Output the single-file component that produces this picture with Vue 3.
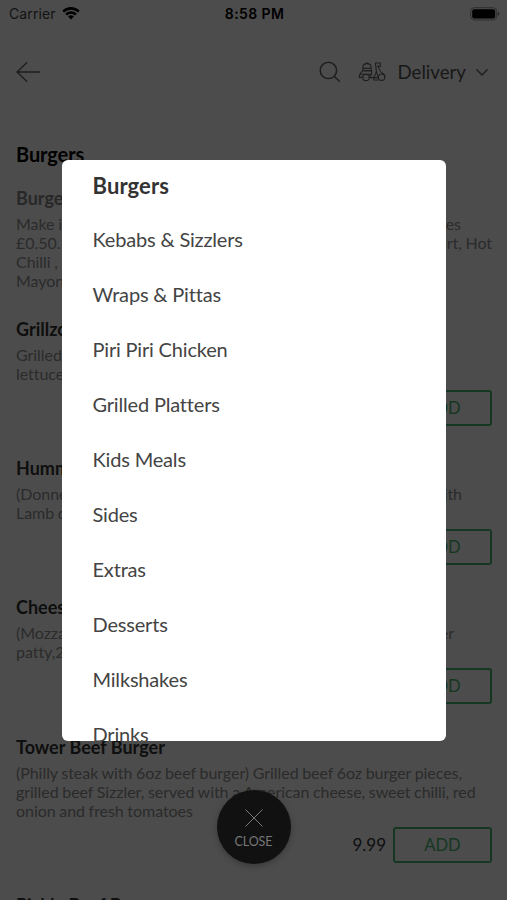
<script setup>
// Menu screen with the category picker open on top

import { ref } from 'vue'

const pickerOpen = ref(true)
const selected = ref('Burgers')

const categories = [
  'Burgers',
  'Kebabs & Sizzlers',
  'Wraps & Pittas',
  'Piri Piri Chicken',
  'Grilled Platters',
  'Kids Meals',
  'Sides',
  'Extras',
  'Desserts',
  'Milkshakes',
  'Drinks',
]

// end: text at the right of the line, width: where the line stops
const note = [
  { text: 'Make it', end: 'sauces', width: 445 },
  { text: '£0.50.', end: 'Yoghurt, Hot', width: 476 },
  { text: 'Chilli , ' },
  { text: 'Mayonnaise' },
]

const items = [
  {
    name: 'Grillzone',
    price: '7.99',
    lines: [{ text: 'Grilled' }, { text: 'lettuce' }],
  },
  {
    name: 'Hummer',
    price: '8.99',
    lines: [{ text: '(Donner', end: 'with', width: 446 }, { text: 'Lamb do' }],
  },
  {
    name: 'Cheese',
    price: '8.99',
    lines: [{ text: '(Mozza', end: 'burger', width: 438 }, { text: 'patty,2' }],
  },
  {
    name: 'Tower Beef Burger',
    price: '9.99',
    lines: [
      { text: '(Philly steak with 6oz beef burger) Grilled beef 6oz burger pieces,' },
      { text: 'grilled beef Sizzler, served with a American cheese, sweet chilli, red' },
      { text: 'onion and fresh tomatoes' },
    ],
  },
  { name: 'Pickle Beef Burger', price: '9.99', lines: [{ text: 'Grilled beef' }] },
]

function choose(name) {
  selected.value = name
  pickerOpen.value = false
}
</script>

<template>
  <div class="screen">
    <div class="status">
      <div class="carrier">
        <span>Carrier</span>
        <svg width="18" height="14" viewBox="0 0 18 14">
          <path d="M0.3 4.7a12.3 12.3 0 0 1 17.4 0l-1.8 1.9a9.8 9.8 0 0 0-13.8 0z" />
          <path d="M3.2 7.7a8.2 8.2 0 0 1 11.6 0l-1.8 1.8a5.7 5.7 0 0 0-8 0z" />
          <path d="M6.1 10.6a4.1 4.1 0 0 1 5.8 0L9 13.5z" />
        </svg>
      </div>
      <div class="time">8:58 PM</div>
      <div class="battery">
        <svg width="30" height="14" viewBox="0 0 30 14">
          <rect x="0.7" y="0.7" width="26" height="12.2" rx="3.6" fill="none" stroke="#999" />
          <rect x="2.2" y="2.2" width="23" height="9.2" rx="2" />
          <path d="M27.8 4.8q1.6 0.6 1.6 2t-1.6 2z" fill="#888" />
        </svg>
      </div>
    </div>

    <header class="header">
      <svg class="back" width="26" height="22" viewBox="0 0 26 22">
        <path d="M24.2 11H1M11.2 1.2L1 11l10.2 9.8" />
      </svg>
      <svg class="search" width="22" height="22" viewBox="0 0 22 22">
        <circle cx="9.4" cy="9.4" r="8.2" />
        <path d="M15.2 15.2l5.6 5.6" />
      </svg>
      <svg class="scooter" width="28" height="20" viewBox="0 0 28 20">
        <path d="M4.8 8.6V6q0-4.4 4.2-4.4T13.2 6v2.6zM4.8 6.4h8.4M7.2 1.8q1.8-1.6 3.6 0" />
        <path d="M4.6 15.4H1.2q-.4-3 3.6-6.8h8.8v3.4l-2 3.4M2.4 12.2h10.8" />
        <circle cx="8" cy="15.4" r="3.2" />
        <circle cx="23.6" cy="15.2" r="3.2" />
        <path d="M11.4 15.6h4.4l2.6-6L17.4 1h4.8v3.4h-2.4l3.4 6q4 1.4 3.6 4.8M18.4 9.6l2 6h-4.6v2.4h5.2" />
      </svg>
      <span class="mode">Delivery</span>
      <svg class="chevron" width="14" height="9" viewBox="0 0 14 9">
        <path d="M1.5 1.5L7 7l5.5-5.5" />
      </svg>
    </header>

    <main class="menu">
      <h1>{{ selected }}</h1>
      <section class="note">
        <h2>Burgers</h2>
        <p v-for="(line, i) in note" :key="i" :style="{ width: line.width + 'px' }">
          <span>{{ line.text }}</span>
          <span v-if="line.end">{{ line.end }}</span>
        </p>
      </section>
      <section v-for="item in items" :key="item.name" class="item">
        <h2>{{ item.name }}</h2>
        <p v-for="(line, i) in item.lines" :key="i" :style="{ width: line.width + 'px' }">
          <span>{{ line.text }}</span>
          <span v-if="line.end">{{ line.end }}</span>
        </p>
        <div class="buy">
          <span>{{ item.price }}</span>
          <button type="button">ADD</button>
        </div>
      </section>
    </main>

    <div v-if="pickerOpen" class="overlay">
      <ul class="picker">
        <li
          v-for="name in categories"
          :key="name"
          :class="{ active: name === selected }"
          @click="choose(name)"
        >
          {{ name }}
        </li>
      </ul>
      <button class="close" type="button" @click="pickerOpen = false">
        <svg width="20" height="20" viewBox="0 0 20 20">
          <path d="M1.5 1.5l17 17M18.5 1.5l-17 17" />
        </svg>
        <span>CLOSE</span>
      </button>
    </div>
  </div>
</template>

<style>
body {
  margin: 0;
  overflow: hidden;
}
</style>

<style scoped>
.screen {
  position: relative;
  height: 900px;
  overflow: hidden;
  background: #fff;
  font-family: Lato, sans-serif;
}
.status {
  display: grid;
  grid-template-columns: 1fr auto 1fr;
  align-items: center;
  height: 27px;
  padding: 0 7px 0 9px;
  font-family: Inter, sans-serif;
  font-size: 14px;
}
.carrier {
  display: flex;
  align-items: center;
  gap: 6px;
  color: #444;
  letter-spacing: 0.1px;
}
.carrier svg {
  margin-top: -2px;
}
.time {
  font-weight: 600;
  letter-spacing: 0.4px;
}
.battery {
  display: flex;
  justify-content: flex-end;
}
.header {
  display: flex;
  align-items: center;
  height: 90px;
  padding: 0 18px 0 16px;
  color: #555;
}
.header svg {
  fill: none;
  stroke: #666;
  stroke-width: 1.5;
}
.header .search {
  margin-left: auto;
}
.header .scooter {
  margin-left: 17px;
  stroke-width: 1.1;
}
.mode {
  margin: 0 9px 0 11px;
  font-size: 18.7px;
}
.menu {
  padding: 25px 15px 0 16px;
}
h1 {
  margin: 0 0 20px;
  font-size: 20px;
  line-height: 24px;
  letter-spacing: -0.1px;
}
h2 {
  margin: 0 0 4px;
  font-size: 18px;
  line-height: 24px;
  color: #333;
}
.note {
  margin-bottom: 27px;
}
.note h2 {
  color: #888;
}
p {
  display: flex;
  justify-content: space-between;
  margin: 0;
  font-size: 16px;
  line-height: 19px;
  color: #909090;
  white-space: nowrap;
  letter-spacing: -0.05px;
  word-spacing: -0.4px;
}
.item {
  margin-bottom: 30.2px;
}
.buy {
  display: flex;
  justify-content: flex-end;
  align-items: center;
  gap: 7px;
  margin-top: 7px;
  font-size: 17px;
  color: #333;
}
.buy button {
  width: 99px;
  height: 36px;
  padding: 0;
  border: 2px solid #49b96f;
  border-radius: 3px;
  background: none;
  font: inherit;
  font-size: 16.5px;
  color: #49b96f;
}
.overlay {
  position: absolute;
  inset: 0;
  display: flex;
  flex-direction: column;
  align-items: center;
  padding-top: 160px;
  background: rgba(0, 0, 0, 0.7);
}
.picker {
  width: 384px;
  height: 581px;
  margin: 0 0 49px;
  padding: 0;
  overflow: hidden;
  border-radius: 6px;
  background: #fff;
  list-style: none;
  font-size: 20px;
  letter-spacing: -0.18px;
  color: #444;
}
.picker li {
  padding: 15.5px 31px;
  line-height: 24px;
}
.picker li.active {
  padding-top: 14px;
  padding-bottom: 13px;
  font-size: 22px;
  letter-spacing: 0.1px;
  font-weight: bold;
  color: #333;
}
.close {
  display: flex;
  flex-direction: column;
  align-items: center;
  width: 74px;
  height: 74px;
  padding: 18px 0 0;
  border: none;
  border-radius: 50%;
  background: #111;
  box-shadow: 0 2px 6px rgba(0, 0, 0, 0.25);
  color: #777;
  font-family: inherit;
  font-size: 12.5px;
  letter-spacing: -0.1px;
}
.close svg {
  margin-bottom: 6px;
  fill: none;
  stroke: #777;
}
</style>
